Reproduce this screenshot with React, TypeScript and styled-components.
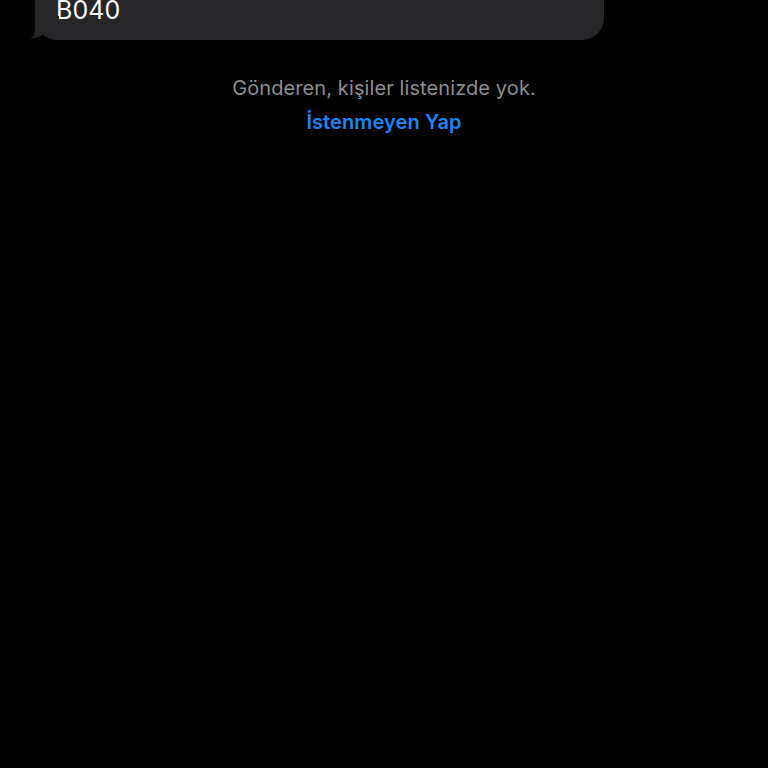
import styled, { createGlobalStyle } from "styled-components";

const GlobalStyle = createGlobalStyle`
    html, body {
        margin: 0;
        padding: 0;
        background: #000;
    }
    body {
        font-family: Inter, "Liberation Sans", Arial, sans-serif;
        -webkit-font-smoothing: antialiased;
    }
`;

const Screen = styled.div`
    width: 768px;
    height: 768px;
    overflow: hidden;
    background: #000;
    display: flex;
    flex-direction: column;
    align-items: center;
`;

const BubbleRow = styled.div`
    align-self: stretch;
    display: flex;
    padding-left: 35px;
    margin-top: -35px;
`;

const Bubble = styled.div`
    position: relative;
    width: 569px;
    box-sizing: border-box;
    padding: 30px 16px 15px 21px;
    background: #262628;
    border-radius: 22px;
    color: #fff;
    font-size: 25px;
    line-height: 30px;
    letter-spacing: 0.1px;
`;

const Tail = styled.svg`
    position: absolute;
    left: -6px;
    bottom: 0;
`;

const Notice = styled.p`
    margin: 36px 0 0;
    color: #8d8d92;
    font-size: 20px;
    line-height: 24px;
    letter-spacing: 0.1px;
    text-align: center;
`;

const SpamLink = styled.button`
    margin-top: 10px;
    padding: 0;
    border: none;
    background: none;
    color: #1a86f5;
    font-family: inherit;
    font-size: 20px;
    font-weight: 600;
    line-height: 24px;
    letter-spacing: 0.1px;
    cursor: pointer;
`;

function App() {
    return (
        <>
            <GlobalStyle />
            <Screen>
                <BubbleRow>
                    <Bubble>
                        B040
                        <Tail width="30" height="24" viewBox="0 0 30 24">
                            <path
                                d="M6 0 L6 12 C6 17 5 20 1.5 22.5 C7 22.5 12 20.5 16 17 C19 20 23 23.5 28 24 L30 24 L30 0 Z"
                                fill="#262628"
                            />
                        </Tail>
                    </Bubble>
                </BubbleRow>
                <Notice>Gönderen, kişiler listenizde yok.</Notice>
                <SpamLink>İstenmeyen Yap</SpamLink>
            </Screen>
        </>
    );
}

export default App;
